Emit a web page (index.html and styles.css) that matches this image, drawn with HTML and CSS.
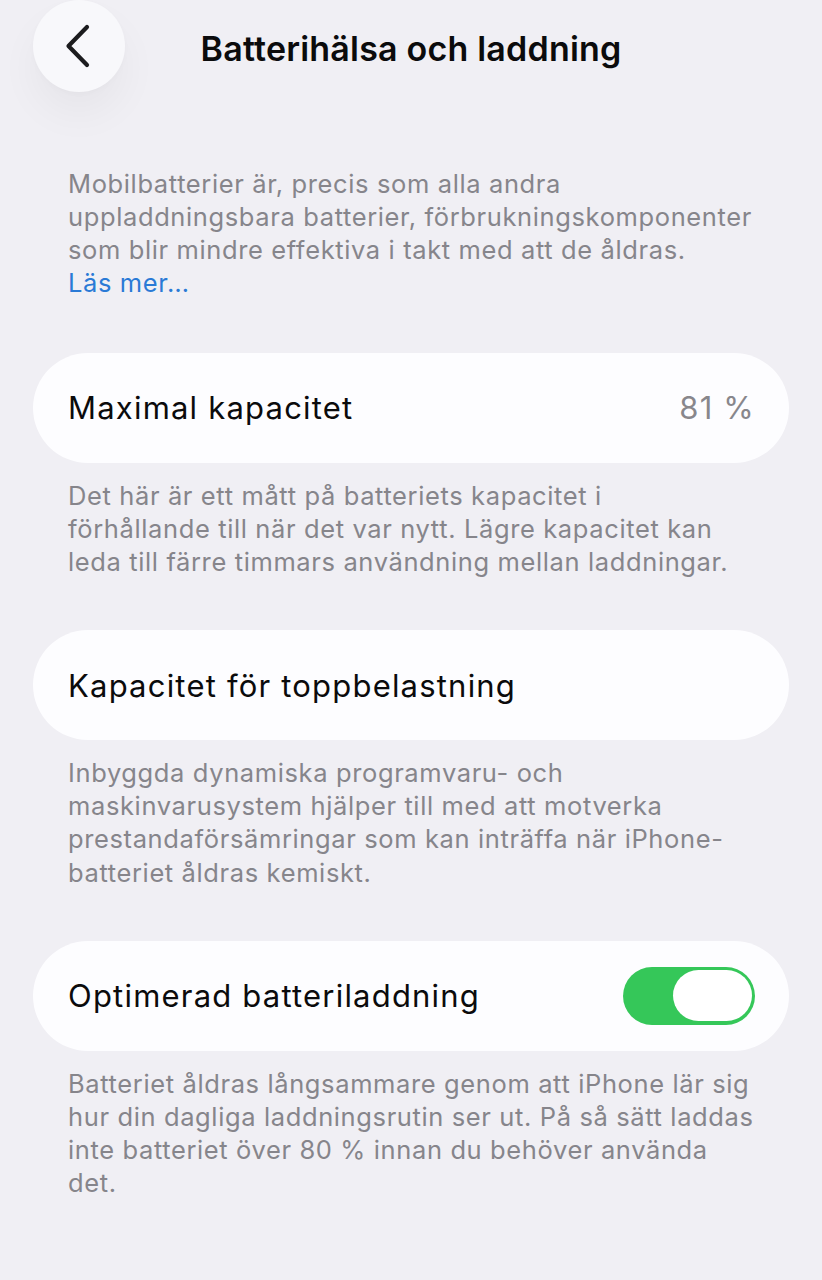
FILE: index.html
```html
<!DOCTYPE html>
<html lang="sv">
<head>
<meta charset="utf-8">
<title>Batterihälsa och laddning</title>
<link rel="stylesheet" href="styles.css">
</head>
<body>
<div class="page">
  <header class="nav">
    <button class="back" aria-label="Tillbaka">
      <svg width="28" height="44" viewBox="0 0 28 44"><path d="M23 3 L4.5 22 L23 41" fill="none" stroke="#1c1c1e" stroke-width="4.2" stroke-linecap="round" stroke-linejoin="round"/></svg>
    </button>
    <h1 class="title">Batterihälsa och laddning</h1>
  </header>

  <p class="intro">Mobilbatterier är, precis som alla andra<br>uppladdningsbara batterier, förbrukningskomponenter<br>som blir mindre effektiva i takt med att de åldras.<br><a class="link" href="#">Läs mer…</a></p>

  <section class="group">
    <div class="card">
      <span class="label">Maximal kapacitet</span>
      <span class="value">81 %</span>
    </div>
    <p class="desc">Det här är ett mått på batteriets kapacitet i<br>förhållande till när det var nytt. Lägre kapacitet kan<br>leda till färre timmars användning mellan laddningar.</p>
  </section>

  <section class="group">
    <div class="card">
      <span class="label">Kapacitet för toppbelastning</span>
    </div>
    <p class="desc">Inbyggda dynamiska programvaru- och<br>maskinvarusystem hjälper till med att motverka<br>prestandaförsämringar som kan inträffa när iPhone-<br>batteriet åldras kemiskt.</p>
  </section>

  <section class="group">
    <div class="card">
      <span class="label">Optimerad batteriladdning</span>
      <span class="toggle"><span class="knob"></span></span>
    </div>
    <p class="desc">Batteriet åldras långsammare genom att iPhone lär sig<br>hur din dagliga laddningsrutin ser ut. På så sätt laddas<br>inte batteriet över 80 % innan du behöver använda<br>det.</p>
  </section>
</div>
</body>
</html>
```

FILE: styles.css
```css
html, body {
  margin: 0;
  padding: 0;
  background: #f0eff4;
}
body {
  font-family: Inter, "Noto Sans", "Liberation Sans", sans-serif;
  color: #111;
  width: 822px;
  height: 1280px;
  overflow: hidden;
}
.page {
  display: flex;
  flex-direction: column;
}
.nav {
  position: relative;
  height: 92px;
  display: flex;
  align-items: center;
  justify-content: center;
}
.back {
  position: absolute;
  left: 33px;
  top: 0;
  width: 92px;
  height: 92px;
  border-radius: 50%;
  border: none;
  background: #f8f8fb;
  box-shadow: 0 22px 40px rgba(0, 0, 0, 0.045), 0 2px 6px rgba(0, 0, 0, 0.02);
  display: flex;
  align-items: center;
  justify-content: center;
  padding: 0 2px 0 0;
}
.title {
  margin: 0;
  font-size: 34px;
  font-weight: 600;
  letter-spacing: 0.2px;
  color: #0b0b0c;
  transform: translateY(2px);
}
.intro {
  margin: 75px 0 0;
  padding: 0 30px 2px 68px;
  font-size: 25.5px;
  line-height: 33px;
  color: #86858b;
  letter-spacing: 0.62px;
  white-space: nowrap;
}
.link {
  color: #2a7ad6;
  text-decoration: none;
}
.group {
  margin-top: 52px;
  display: flex;
  flex-direction: column;
}
.card {
  margin: 0 33px;
  height: 109.5px;
  background: #fdfdff;
  border-radius: 55px;
  display: flex;
  align-items: center;
  justify-content: space-between;
  padding: 0 34px 0 35px;
}
.label {
  font-size: 31px;
  letter-spacing: 1.2px;
  color: #0b0b0c;
}
.value {
  font-size: 31px;
  color: #88878c;
  letter-spacing: 1.2px;
}
.desc {
  margin: 16px 0 0;
  padding: 0 30px 0 68px;
  font-size: 25.5px;
  line-height: 33.3px;
  color: #86858b;
  letter-spacing: 0.62px;
  white-space: nowrap;
}
.toggle {
  width: 132px;
  height: 58px;
  border-radius: 29px;
  background: #35c759;
  display: flex;
  align-items: center;
  justify-content: flex-end;
  padding: 0 3px;
  box-sizing: border-box;
}
.knob {
  width: 79px;
  height: 51px;
  border-radius: 26px;
  background: #fff;
}
```
